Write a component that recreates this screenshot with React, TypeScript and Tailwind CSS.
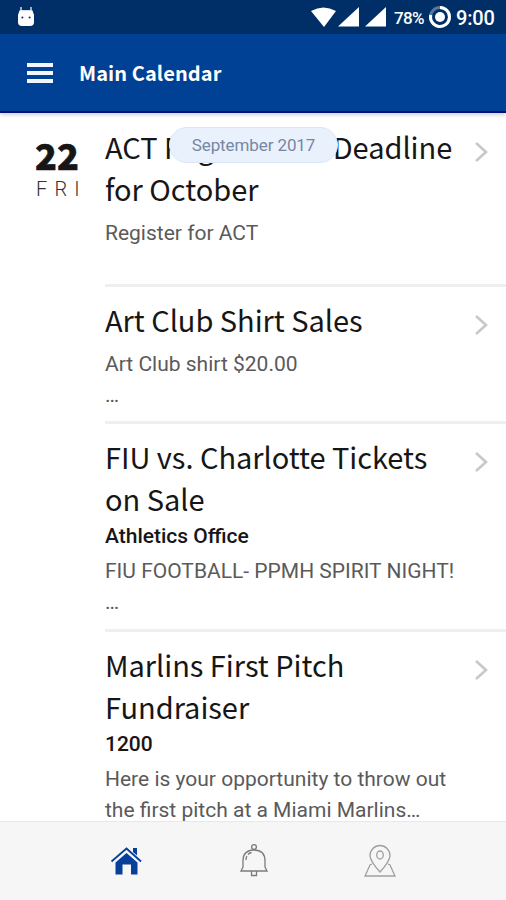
import React from "react";

type Item = {
  title: string[];
  place?: string;
  body: string[];
  height: string;
};

const items: Item[] = [
  {
    title: ["ACT Registration Deadline", "for October"],
    body: ["Register for ACT"],
    height: "h-[174px] pt-[12px]",
  },
  {
    title: ["Art Club Shirt Sales"],
    body: ["Art Club shirt $20.00", "…"],
    height: "h-[137px] pt-[11px]",
  },
  {
    title: ["FIU vs. Charlotte Tickets", "on Sale"],
    place: "Athletics Office",
    body: ["FIU FOOTBALL- PPMH SPIRIT NIGHT!", "…"],
    height: "h-[208px] pt-[11px]",
  },
  {
    title: ["Marlins First Pitch", "Fundraiser"],
    place: "1200",
    body: ["Here is your opportunity to throw out", "the first pitch at a Miami Marlins…"],
    height: "h-[208px] pt-[11px]",
  },
];

function StatusBar() {
  return (
    <div className="flex h-[34px] shrink-0 items-center bg-[#002f68] text-white">
      <svg className="ml-[17px] h-[22px] w-[18px]" viewBox="0 0 18 22" fill="#fff">
        <path d="M4 1v4h10V1" fill="none" stroke="#dfe6f0" strokeWidth="1.4" />
        <path d="M2.500 4.500h13L17 9v7q0 4-4 4H5q-4 0-4-4V9z" />
        <circle cx="5.400" cy="11.500" r="1" fill="#002f68" />
        <circle cx="12.600" cy="11.500" r="1" fill="#002f68" />
      </svg>
      <svg className="ml-[276px] h-[20px] w-[75px]" viewBox="0 0 75 20" fill="#fff">
        <path d="M0 4Q12.500-3 25 4L13 20z" />
        <path d="M48 0v19.500H27z" />
        <path d="M75 0v19.500H54z" />
      </svg>
      <span className="ml-[8px] mt-[2px] w-[31px] whitespace-nowrap font-[Roboto,sans-serif] text-[17px] font-medium leading-[20px] tracking-[-0.6px]">78%</span>
      <svg className="ml-[3px] h-[24px] w-[24px]" viewBox="0 0 24 24" fill="none">
        <circle cx="12" cy="12" r="9.500" stroke="#58779b" strokeWidth="3" />
        <path d="M12 2.500A9.500 9.500 0 1 1 2.700 10" stroke="#fff" strokeWidth="3" />
        <circle cx="12" cy="12" r="5" fill="#fff" />
      </svg>
      <span className="ml-[4px] mt-[2px] whitespace-nowrap font-[Roboto,sans-serif] text-[20px] font-medium leading-[24px] tracking-[-0.2px]">9:00</span>
    </div>
  );
}

function Header() {
  return (
    <header className="z-10 flex h-[79px] shrink-0 items-center border-b-2 border-[#00107f] bg-[#004195] pl-[27px] shadow-[0_2px_4px_#00000030]">
      <div className="flex w-[26px] flex-col gap-[4px]">
        <div className="h-[4px] bg-[#f2f5fb]" />
        <div className="h-[4px] bg-[#f2f5fb]" />
        <div className="h-[4px] bg-[#f2f5fb]" />
      </div>
      <h1 className="ml-[26px] whitespace-nowrap font-['Noto_Sans_CJK_SC',sans-serif] text-[20px] font-bold leading-[30px] tracking-[0.08px] text-white">
        Main Calendar
      </h1>
    </header>
  );
}

function EventRow({ item, last }: { item: Item; last: boolean }) {
  return (
    <article className={`flex shrink-0 justify-between ${item.height} ${last ? "" : "border-b-[3px] border-[#efefef]"}`}>
      <div className="whitespace-nowrap">
        <h2 className="font-['Noto_Sans_CJK_SC',sans-serif] text-[29px] leading-[42px] tracking-[-0.03px] text-[#161616]">
          {item.title.map((line) => (
            <span key={line} className="block">{line}</span>
          ))}
        </h2>
        {item.place && (
          <p className="mt-[2px] h-[30px] font-[Roboto,sans-serif] text-[21px] font-medium leading-[30px] text-[#161616]">{item.place}</p>
        )}
        <div className={`font-[Roboto,sans-serif] text-[21px] leading-[31px] text-[#5a5a5a] ${item.place ? "mt-[5px]" : "mt-[9px]"}`}>
          {item.body.map((line) => (
            <p key={line}>{line}</p>
          ))}
        </div>
      </div>
      <svg className="mr-[17px] mt-[16px] h-[22px] w-[15px]" viewBox="0 0 15 22" fill="none" stroke="#c8c8c8" strokeWidth="2.600">
        <path d="m2 2 10 9-10 9" />
      </svg>
    </article>
  );
}

function BottomNav() {
  return (
    <nav className="flex h-[79px] shrink-0 items-center border-t border-[#e8e8e8] bg-[#f6f6f6] pl-[110px]">
      <svg className="h-[30px] w-[32px]" viewBox="0 0 32 30" fill="#07409a">
        <path d="M23 2h4v7.500l-4-3.500z" />
        <path d="M5.500 16.500 16.500 7 27.500 16.500V28.500H21V18.500h-8.500v10h-7z" />
        <path d="M1.500 15.500 16.500 2.500 31 15.500" fill="none" stroke="#07409a" strokeWidth="1.800" />
      </svg>
      <svg className="ml-[97px] h-[36px] w-[30px]" viewBox="0 0 30 36" fill="none" stroke="#7c7c7c" strokeWidth="1.300">
        <circle cx="15" cy="4" r="2.400" />
        <path d="M4 24V18C4 10 9 7 15 7s11 3 11 11v6l2 4H2z" />
        <path d="M12.500 28v4.500h5V28" />
        <path d="M7 17q0-6 5.500-7.500" strokeDasharray="4 2" />
      </svg>
      <svg className="ml-[95px] h-[34px] w-[32px]" viewBox="0 0 32 34" fill="none" stroke="#a0a0a0" strokeWidth="1.300">
        <path d="M16 28Q6 17 6 11.500a10 10 0 0 1 20 0q0 5.500-10 16.500z" />
        <ellipse cx="16" cy="11" rx="3.300" ry="4" />
        <path d="M8 20 6 21 1 32h30L26 21l-2-1" />
      </svg>
    </nav>
  );
}

export default function App() {
  return (
    <div className="flex h-[900px] w-[506px] flex-col overflow-hidden bg-white">
      <StatusBar />
      <Header />
      <main className="relative flex min-h-0 flex-1 overflow-hidden">
        <aside className="w-[105px] shrink-0 pl-[35px] pt-[21px]">
          <div className="font-['Noto_Sans_CJK_SC',sans-serif] text-[36px] font-black leading-[40px] text-[#161616] [-webkit-text-stroke:0.6px_#161616]">22</div>
          <div className="mt-[4px] pl-[1px] font-[Roboto,sans-serif] text-[20px] font-light leading-[22px] tracking-[7.2px] text-[#333]">FRI</div>
        </aside>
        <section className="flex min-w-0 flex-1 flex-col">
          {items.map((item, i) => (
            <EventRow key={item.title[0]} item={item} last={i === items.length - 1} />
          ))}
        </section>
        <div className="absolute left-[169px] top-[14px] flex h-[36px] w-[169px] items-center justify-center whitespace-nowrap rounded-full border border-[#dbe5f5] bg-[#e9f1fd] pt-[2px] font-[Roboto,sans-serif] text-[17px] tracking-[-0.1px] text-[#7787a3]">
          September 2017
        </div>
      </main>
      <BottomNav />
    </div>
  );
}
